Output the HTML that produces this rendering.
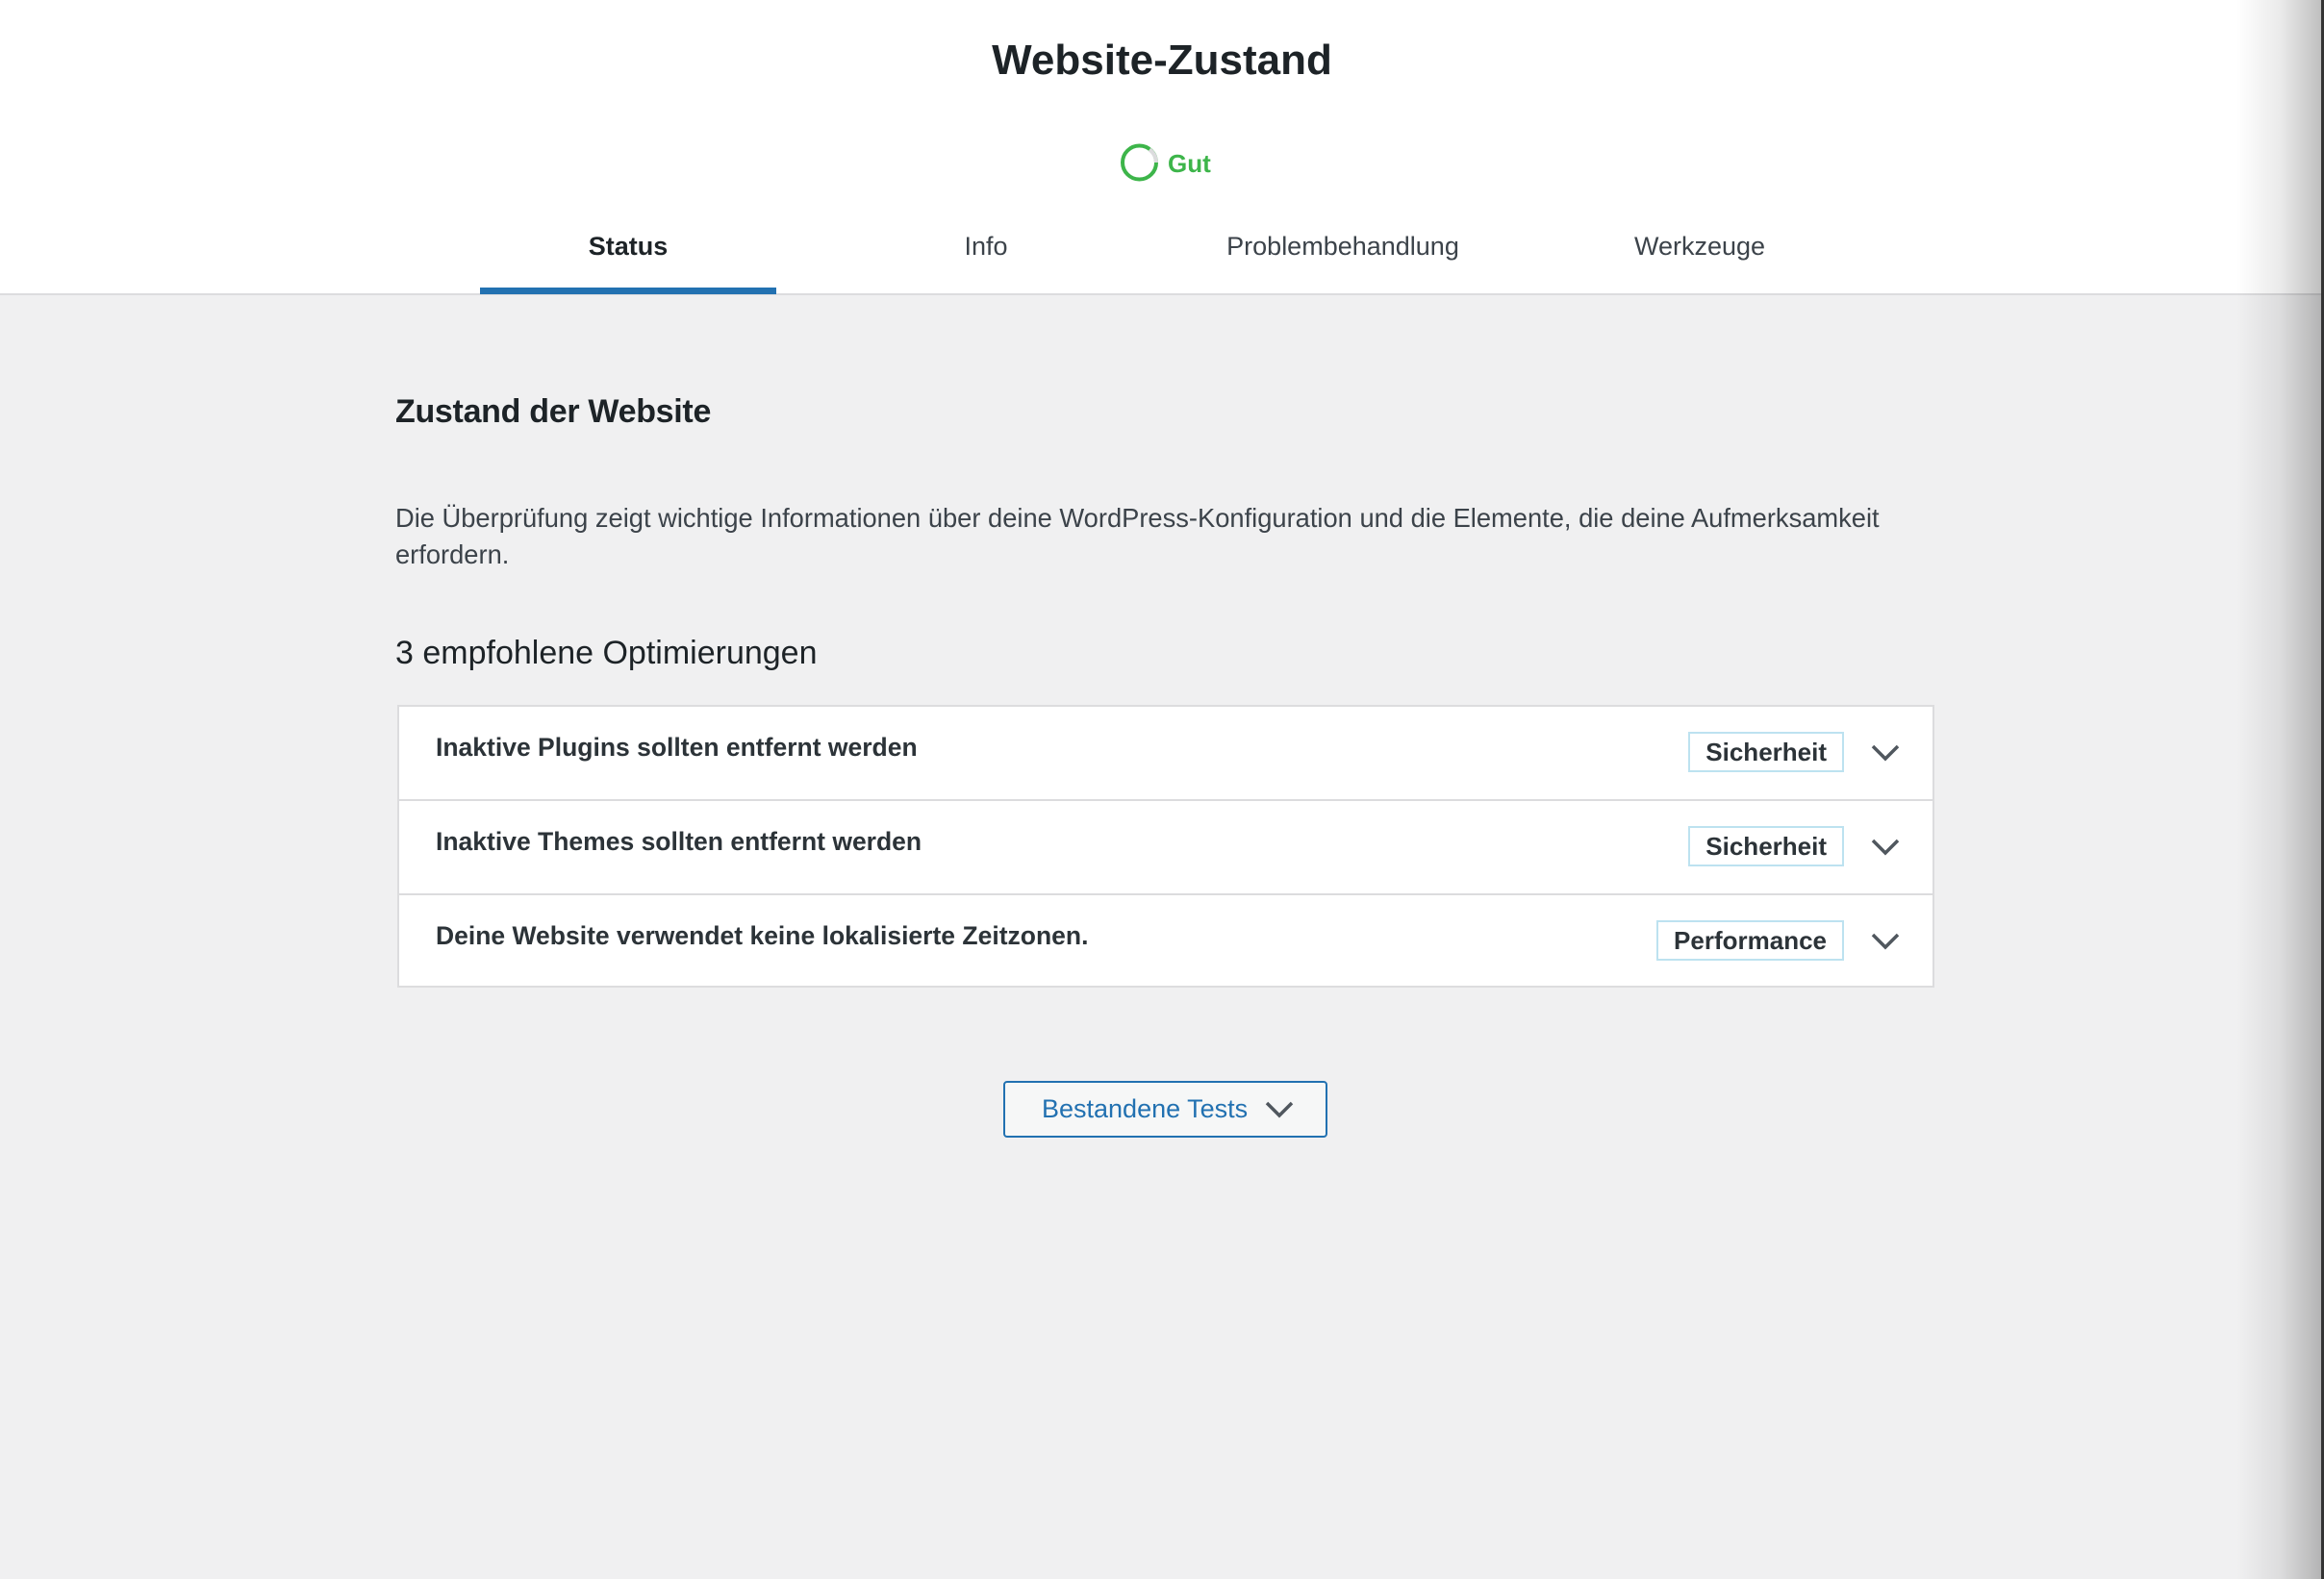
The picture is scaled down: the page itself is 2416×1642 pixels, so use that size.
<!DOCTYPE html>
<html><head><meta charset="utf-8">
<style>
*{margin:0;padding:0;box-sizing:border-box}
body{width:2416px;height:1642px;background:#f0f0f1;font-family:"Liberation Sans",sans-serif;position:relative;overflow:hidden;color:#1d2327}
.hdr{position:absolute;left:0;top:0;width:2416px;height:307px;background:#fff;border-bottom:2px solid #dcdcde}
.a{position:absolute;white-space:nowrap}
.tab{position:absolute;top:240px;font-size:27px;color:#3c434a;transform:translateX(-50%);line-height:32px}
.box{position:absolute;left:413px;top:733px;width:1598px;height:294px;background:#fff;border:2px solid #dcdcde}
.row{position:absolute;left:0;width:100%;height:98px;border-bottom:2px solid #dcdcde}
.row .t{position:absolute;left:38px;top:27px;font-size:26.5px;font-weight:bold;color:#2c3338;line-height:30px}
.badge{position:absolute;right:92px;top:26px;height:42px;border:2px solid #bde2f0;font-size:26px;font-weight:bold;color:#2c3338;padding:0 16px;line-height:38px}
.chev{position:absolute;right:34px;top:38px}
.shadow{position:absolute;left:2325px;top:0;width:88px;height:1642px;background:linear-gradient(to right,rgba(0,0,0,0),rgba(0,0,0,.08) 50%,rgba(0,0,0,.25))}
.edge{position:absolute;left:2413px;top:0;width:3px;height:1642px;background:#333}
</style></head><body>
<div class="hdr"></div>
<div class="a" style="left:0;width:2416px;text-align:center;top:36px;font-size:44px;font-weight:bold;line-height:54px;color:#1d2327">Website-Zustand</div>
<svg class="a" style="left:1163px;top:148px" width="44" height="44" viewBox="0 0 44 44">
<circle cx="21.5" cy="21" r="17.5" fill="none" stroke="#3db54a" stroke-width="4"/>
<path d="M32 7.5 A17.5 17.5 0 0 1 39 21" fill="none" stroke="#dcdcde" stroke-width="4"/>
</svg>
<div class="a" style="left:1214px;top:155px;font-size:26px;font-weight:bold;color:#3db54a;line-height:30px">Gut</div>
<div class="tab" style="left:653px;font-weight:bold;color:#1d2327">Status</div>
<div class="tab" style="left:1025px">Info</div>
<div class="tab" style="left:1396px">Problembehandlung</div>
<div class="tab" style="left:1767px">Werkzeuge</div>
<div class="a" style="left:499px;top:299px;width:308px;height:7px;background:#2271b1"></div>

<div class="a" style="left:411px;top:409px;font-size:34px;font-weight:bold;line-height:38px;letter-spacing:-0.3px">Zustand der Website</div>
<div class="a" style="left:411px;top:520px;font-size:27.3px;line-height:38px;color:#3c434a">Die Überprüfung zeigt wichtige Informationen über deine WordPress-Konfiguration und die Elemente, die deine Aufmerksamkeit<br>erfordern.</div>
<div class="a" style="left:411px;top:660px;font-size:34px;line-height:38px;color:#1d2327">3 empfohlene Optimierungen</div>

<div class="box">
 <div class="row" style="top:0">
  <div class="t">Inaktive Plugins sollten entfernt werden</div>
  <div class="badge">Sicherheit</div>
  <svg class="chev" width="30" height="20" viewBox="0 0 30 20"><path d="M2 3 L15 16 L28 3" fill="none" stroke="#50575e" stroke-width="3.5"/></svg>
 </div>
 <div class="row" style="top:98px">
  <div class="t">Inaktive Themes sollten entfernt werden</div>
  <div class="badge">Sicherheit</div>
  <svg class="chev" width="30" height="20" viewBox="0 0 30 20"><path d="M2 3 L15 16 L28 3" fill="none" stroke="#50575e" stroke-width="3.5"/></svg>
 </div>
 <div class="row" style="top:196px;border-bottom:none">
  <div class="t">Deine Website verwendet keine lokalisierte Zeitzonen.</div>
  <div class="badge">Performance</div>
  <svg class="chev" width="30" height="20" viewBox="0 0 30 20"><path d="M2 3 L15 16 L28 3" fill="none" stroke="#50575e" stroke-width="3.5"/></svg>
 </div>
</div>

<div class="a" style="left:1043px;top:1124px;width:337px;height:59px;border:2px solid #2271b1;border-radius:4px;background:#f6f7f7"></div>
<div class="a" style="left:1083px;top:1137px;font-size:27px;color:#2271b1;line-height:32px">Bestandene Tests</div>
<svg class="a" style="left:1315px;top:1144px" width="30" height="20" viewBox="0 0 30 20"><path d="M2 3 L15 16 L28 3" fill="none" stroke="#50575e" stroke-width="3.5"/></svg>

<div class="shadow"></div>
<div class="edge"></div>
</body></html>
